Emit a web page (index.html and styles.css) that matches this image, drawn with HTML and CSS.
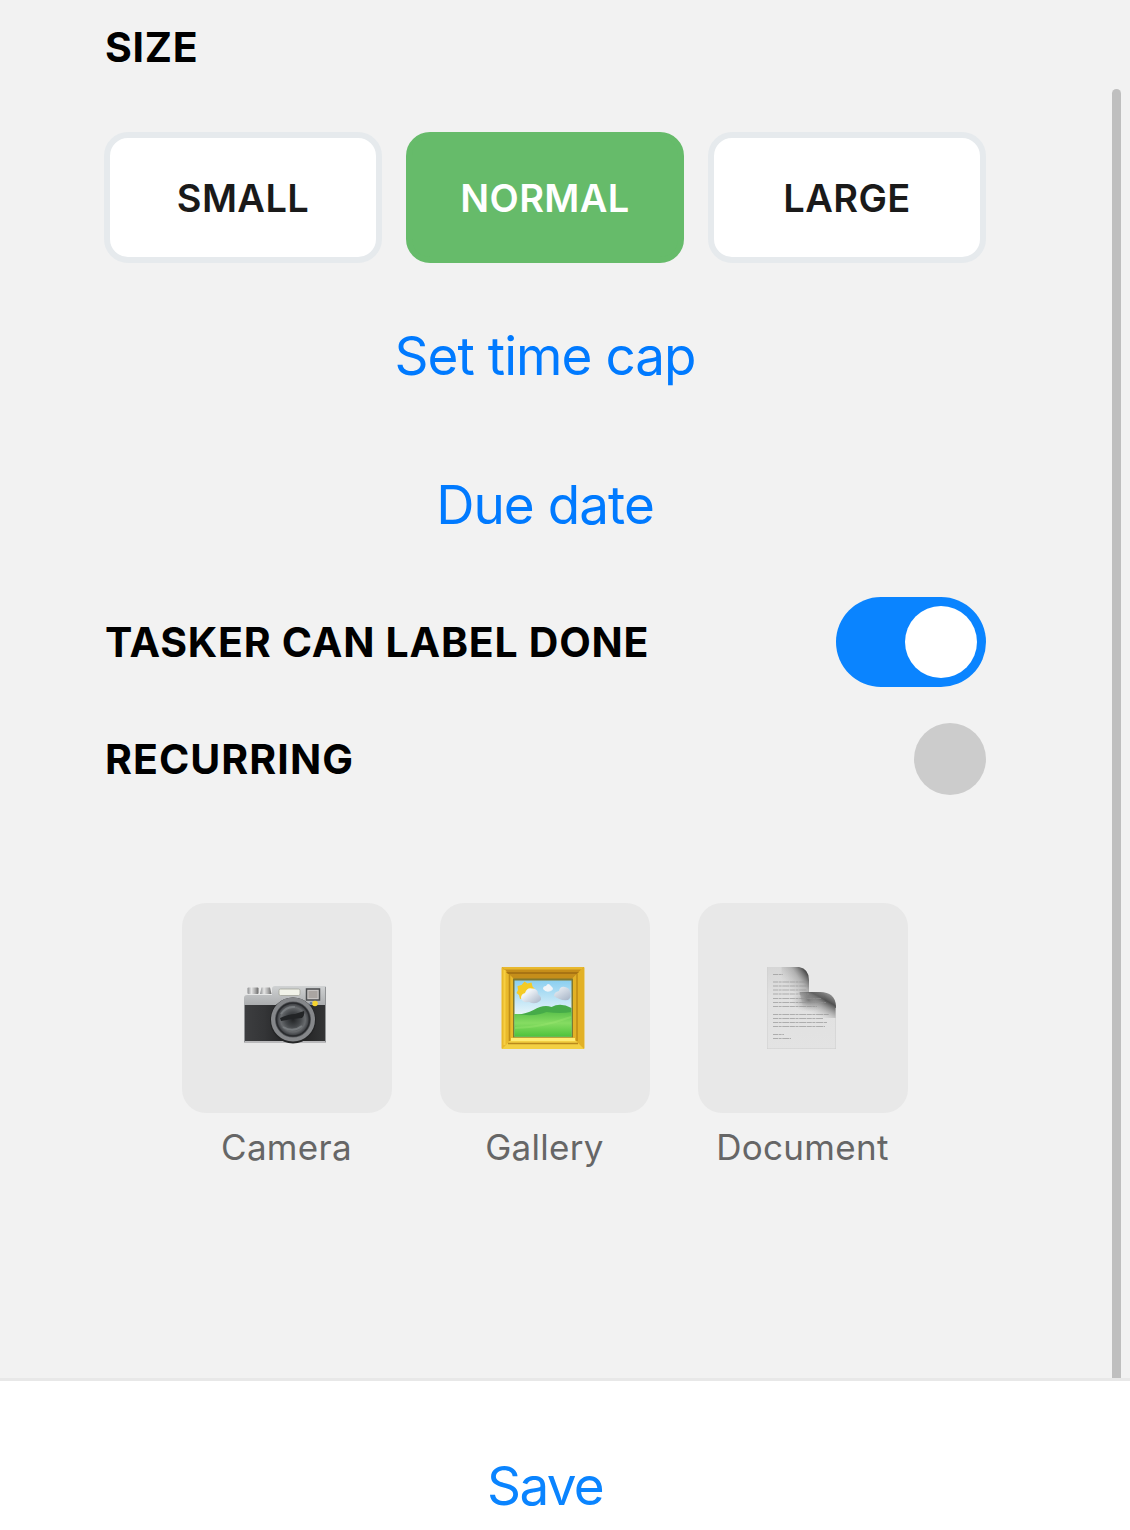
FILE: index.html
```html
<!DOCTYPE html>
<html lang="en">
<head>
<meta charset="utf-8">
<title>Task options</title>
<link rel="stylesheet" href="styles.css">
</head>
<body>
<div class="screen">
  <main class="panel">
    <h2 class="heading heading-size">SIZE</h2>
    <div class="sizes">
      <button class="size">SMALL</button>
      <button class="size selected">NORMAL</button>
      <button class="size">LARGE</button>
    </div>
    <a class="link time-cap">Set time cap</a>
    <a class="link due-date">Due date</a>
    <div class="option option-done">
      <h2 class="heading">TASKER CAN LABEL DONE</h2>
      <div class="switch"><div class="knob"></div></div>
    </div>
    <div class="option option-recurring">
      <h2 class="heading recurring">RECURRING</h2>
      <div class="dot"></div>
    </div>
    <div class="attachments">
      <div class="attachment">
        <div class="tile">
          <svg class="icon" width="100" height="100" viewBox="0 -17 100 100">
            <defs>
              <linearGradient id="silver" x1="0" y1="0" x2="0" y2="1"><stop offset="0" stop-color="#d0d2d3"/><stop offset="1" stop-color="#a9abad"/></linearGradient>
              <linearGradient id="knobs" x1="0" y1="0" x2="1" y2="0"><stop offset="0" stop-color="#8a8c8e"/><stop offset=".35" stop-color="#e6e6e6"/><stop offset=".7" stop-color="#aaa"/><stop offset="1" stop-color="#666"/></linearGradient>
              <linearGradient id="body" x1="0" y1="0" x2="1" y2="0"><stop offset="0" stop-color="#3d3e40"/><stop offset=".25" stop-color="#343537"/><stop offset=".6" stop-color="#1d1d1e"/><stop offset="1" stop-color="#343536"/></linearGradient>
              <radialGradient id="lens"><stop offset="0" stop-color="#222426"/><stop offset=".45" stop-color="#45484b"/><stop offset=".75" stop-color="#686b6e"/><stop offset="1" stop-color="#34363a"/></radialGradient>
              <clipPath id="camclip"><rect x="9" y="11" width="82" height="58"/></clipPath>
            </defs>
            <path d="M9 23q0-3 3-3h25v-6q0-3 3-3h51v20H9z" fill="url(#silver)"/>
            <rect x="12.500" y="12.500" width="11" height="6.500" rx="1" fill="url(#knobs)"/>
            <path d="M26.500 12.500h8.500l1.500 6.500H25z" fill="url(#knobs)"/>
            <path d="M9 19.500h28" stroke="#e6e7e7"/>
            <path d="M9 30h82v36H9z" fill="url(#body)"/>
            <path d="M9 66h82v2H9z" fill="#b9b9bb"/>
            <path d="M9.500 30v37M90.500 12v55" stroke="#929496"/>
            <g clip-path="url(#camclip)">
              <circle cx="58" cy="45.500" r="23" fill="#242526"/>
              <circle cx="58" cy="44.500" r="20" fill="#55575a" stroke="#85878a" stroke-width="4"/>
              <circle cx="58" cy="44.500" r="16.500" fill="url(#lens)" stroke="#292b2e" stroke-width="1.500"/>
            </g>
            <path d="M45 43q9-4 15-4l9-3q1 4-2 7l-10 1-11 2z" fill="#222426"/>
            <path d="M46 39q5-8 14-7M48 52q10 6 19-1" fill="none" stroke="#777b7e" stroke-width="2"/>
            <rect x="44" y="14" width="21" height="6.500" rx="1.500" fill="#f2f3e9" stroke="#a2a399" stroke-width=".8"/>
            <rect x="71.500" y="14" width="13" height="11" fill="#c6c3c2" stroke="#4c4e50" stroke-width="1.500"/>
            <path d="M73.500 16h9v7h-9z" fill="#aaa5a2"/>
            <circle cx="80" cy="28.500" r="2.800" fill="#f5d32f"/><circle cx="76" cy="28.500" r="1.400" fill="#6278a0"/>
          </svg>
        </div>
        <div class="caption">Camera</div>
      </div>
      <div class="attachment">
        <div class="tile">
          <svg class="icon" width="100" height="100" viewBox="0 0 100 100">
            <defs>
              <linearGradient id="sky" x1="0" y1="0" x2="0" y2="1"><stop offset="0" stop-color="#8bcff0"/><stop offset=".6" stop-color="#e7f5fa"/></linearGradient>
              <linearGradient id="grass" x1="0" y1="0" x2="0" y2="1"><stop offset="0" stop-color="#5cc24c"/><stop offset=".45" stop-color="#86dc62"/><stop offset="1" stop-color="#4ec33c"/></linearGradient>
              <linearGradient id="cloud" x1="0" y1="0" x2="1" y2="1"><stop offset=".3" stop-color="#f0f4f8"/><stop offset="1" stop-color="#a5b3c6"/></linearGradient>
            </defs>
            <rect x="8.500" y="9" width="83" height="82" rx="1" fill="#e9b92a"/>
            <path d="M9 9l12 12h58L91 9z" fill="#c58e1a"/>
            <path d="M9 9h82l-2.500 2.500h-77z" fill="#e8b82e"/>
            <path d="M13 14h74l-2 2H15z" fill="#a87413"/>
            <path d="M91 9L79 21v58l12 12z" fill="#e2b126"/>
            <path d="M9 91l12-12h58l12 12z" fill="#f3d042"/>
            <path d="M16.500 16v67M84 16v67" stroke="#c08d17" stroke-width="1.600"/>
            <path d="M11.500 12v75" stroke="#f7cf42" stroke-width="2"/>
            <path d="M15 85.500h70" stroke="#b9891b" stroke-width="1.300"/>
            <path d="M18 81.500h64" stroke="#ffec72" stroke-width="3"/>
            <rect x="20" y="20.500" width="60" height="59" fill="#80782f"/>
            <rect x="21.500" y="22.500" width="57" height="56" fill="url(#sky)"/>
            <path d="M31.500 23.500l3 2 4-1 1 4 2.500 2.500-1.500 3 .5 4-4 1-3 3-3-2-4 1-1-4-2.500-2 1.500-3-.5-4 4-1z" fill="#f5cb25"/>
            <path d="M28 40q0-4 4-5 2-6 7-4.500 6 0 6 5.500 5 4 2 7-5 4-11 1-7 1-8-4z" fill="url(#cloud)"/>
            <path d="M50 31q0-3 3-3 2-4 5 0 4 3 0 5-5 2-8-2zM61 38q0-4 5-5 1-5 6-4 5 1 5 5 2 5-2 8-8 1-14-4z" fill="url(#cloud)"/>
            <path d="M21.500 56q10 1 19-4 10-6 18-3 9-5 20 1v28.500h-57z" fill="#46ab49"/>
            <path d="M21.500 56q22 3 32-2 14 2 25 0v24.500h-57z" fill="url(#grass)"/>
            <path d="M22 70q25 0 56-11" stroke="#a6eb77" stroke-width="2" opacity=".3" fill="none"/>
          </svg>
        </div>
        <div class="caption">Gallery</div>
      </div>
      <div class="attachment">
        <div class="tile">
          <svg class="icon" width="100" height="100" viewBox="0 0 100 100">
            <defs>
              <linearGradient id="paper" x1="0" y1="0" x2="0" y2="1"><stop offset="0" stop-color="#d6d6d6"/><stop offset=".35" stop-color="#e0e0e0"/><stop offset="1" stop-color="#e3e3e3"/></linearGradient>
              <linearGradient id="fold" gradientUnits="userSpaceOnUse" x1="34" y1="33" x2="58" y2="16"><stop offset="0" stop-color="#bbb" stop-opacity="0"/><stop offset=".5" stop-color="#999" stop-opacity=".6"/><stop offset=".85" stop-color="#444"/><stop offset="1" stop-color="#999"/></linearGradient>
              <linearGradient id="flap" gradientUnits="userSpaceOnUse" x1="74" y1="33" x2="60" y2="58"><stop offset="0" stop-color="#a8a8a8"/><stop offset=".35" stop-color="#505050"/><stop offset=".6" stop-color="#8d8d8d" stop-opacity=".7"/><stop offset="1" stop-color="#ccc" stop-opacity="0"/></linearGradient>
              <radialGradient id="curl"><stop offset="0" stop-color="#666" stop-opacity=".7"/><stop offset="1" stop-color="#aaa" stop-opacity="0"/></radialGradient>
              <clipPath id="sheet"><path d="M11.500 9h32q10 2 10 13v12h11q15 0 16 14v43h-69z"/></clipPath>
            </defs>
            <g transform="translate(4.500 0)" clip-path="url(#sheet)">
              <path d="M11 9h70v83H11z" fill="url(#paper)"/>
              <path d="M26 9h28v35q-8-9-28-14z" fill="url(#fold)"/>
              <path d="M44 34h37v26H50z" fill="url(#flap)"/>
              <ellipse cx="53" cy="42" rx="17" ry="12" fill="url(#curl)"/>
              <path d="M11.500 9v82h69V50" fill="none" stroke="#cdcdcd"/>
            </g>
            <g stroke="#929292" stroke-width="1.100" stroke-dasharray="5 .6 3 .7 7 .6" opacity=".65">
              <path d="M22 16.500h10M22 24h34M22 28h36M22 32h34M22 36h36M22 40.500h48M22 44.500h53M22 48.500h44M22 56.500h56M22 60.500h50M22 64.500h54M22 68.500h52M22 76.500h11M22 80.500h18"/>
            </g>
          </svg>
        </div>
        <div class="caption">Document</div>
      </div>
    </div>
    <div class="scrollbar"></div>
  </main>
  <footer class="footer"><a class="link save">Save</a></footer>
</div>
</body>
</html>
```
FILE: styles.css
```css
* { box-sizing: border-box; }
body { margin: 0; font-family: Inter, "Liberation Sans", sans-serif; background: #fff; }
.screen { width: 1130px; height: 1530px; overflow: hidden; }
.panel { position: relative; height: 1378px; background: #f2f2f2; padding: 22px 144px 0 104px; }
.heading { margin: 0; padding-left: 1px; font-size: 41px; line-height: 50px; font-weight: 700; letter-spacing: .75px; color: #000; white-space: nowrap; }
.recurring { letter-spacing: 1.05px; }
.heading-size { margin-bottom: 60px; }
.sizes { display: grid; grid-template-columns: 278px 278px 278px; gap: 24px; }
.size { height: 131px; padding: 1px 0 0; border: 6px solid #e6eaed; border-radius: 24px; background: #fff; color: #1a1a1a; font: 600 38px/48px Inter, "Liberation Sans", sans-serif; letter-spacing: .4px; }
.selected { background: #66bb6a; border-color: #66bb6a; color: #fff; }
.link { display: block; text-align: center; font-size: 53px; line-height: 64px; letter-spacing: -.95px; color: #007aff; white-space: nowrap; }
.time-cap { margin-top: 61px; }
.due-date { margin-top: 85px; }
.option { display: flex; align-items: center; justify-content: space-between; }
.option-done { margin-top: 60px; }
.option-recurring { margin-top: 36px; }
.switch { width: 150px; height: 90px; border-radius: 45px; background: #0a84ff; padding: 9px; display: flex; justify-content: flex-end; }
.knob, .dot { width: 72px; height: 72px; border-radius: 50%; background: #fff; }
.dot { background: #ccc; }
.attachments { display: flex; justify-content: center; gap: 48px; margin-top: 108px; }
.attachment { width: 210px; }
.tile { height: 210px; border-radius: 24px; background: #e8e8e8; display: flex; align-items: center; justify-content: center; padding-right: 4px; }
.icon { display: block; }
.caption { margin-top: 12px; padding-right: 1px; text-align: center; font-size: 35px; line-height: 44px; letter-spacing: .3px; color: #666; }
.scrollbar { position: absolute; left: 1112px; top: 89px; width: 9px; height: 1289px; border-radius: 5px 5px 0 0; background: #bfbfbf; }
.footer { height: 152px; border-top: 3px solid #e8e8e8; padding: 73px 144px 0 104px; }
.save { color: #0a84ff; letter-spacing: -1.7px; }
```
